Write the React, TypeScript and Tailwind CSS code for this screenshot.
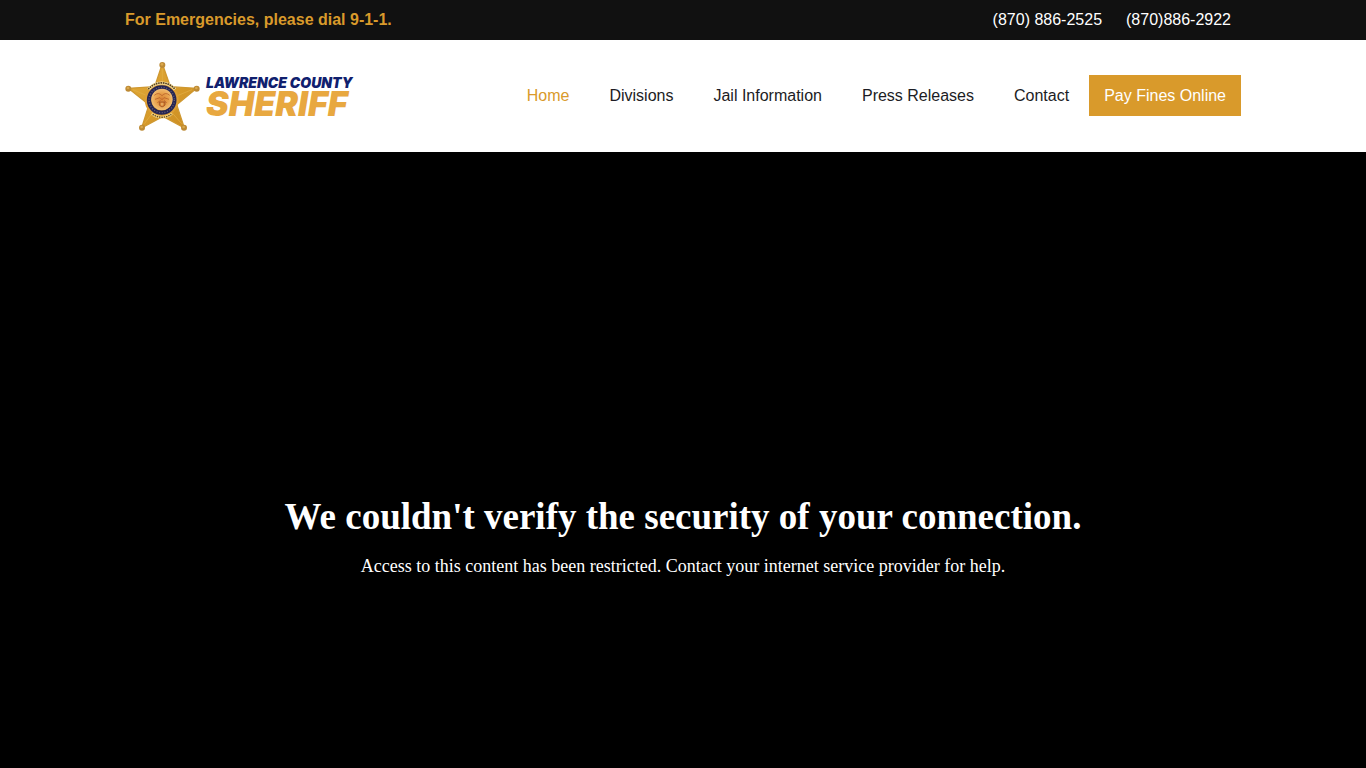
import React from 'react';

const navLinks = [
    { label: 'Home', href: '#home', active: true },
    { label: 'Divisions', href: '#divisions' },
    { label: 'Jail Information', href: '#jail' },
    { label: 'Press Releases', href: '#press' },
    { label: 'Contact', href: '#contact' },
];

const tips = [
    [143, 28],
    [246, 99],
    [208, 216],
    [82, 216],
    [41, 99],
];

const StarBadge: React.FC = () => (
    <svg viewBox="31 13 225 216" className="w-[75px] h-[72px] shrink-0" aria-hidden="true">
        <defs>
            <linearGradient id="gold" x1="0" y1="0" x2="1" y2="1">
                <stop offset="0" stopColor="#e3ac3c" />
                <stop offset="0.5" stopColor="#d99d2b" />
                <stop offset="1" stopColor="#c98a22" />
            </linearGradient>
            <radialGradient id="seal">
                <stop offset="0" stopColor="#d98234" />
                <stop offset="0.6" stopColor="#e8a14c" />
                <stop offset="1" stopColor="#f0bd73" />
            </radialGradient>
        </defs>
        <path
            d="M143 24 L167 93 L246 98 L186 147 L209 217 L145 182 L81 217 L103 147 L41 98 L120 93 Z"
            fill="url(#gold)"
            stroke="#cf9830"
            strokeWidth="4"
            strokeLinejoin="round"
        />
        <path d="M143 40 L143 80 M232 102 L188 120 M201 204 L172 171 M89 204 L114 171 M55 102 L97 120" stroke="#e2b048" strokeWidth="2" />
        {tips.map(([cx, cy]) => (
            <g key={`${cx}-${cy}`}>
                <circle cx={cx} cy={cy} r="9" fill="#bd8a35" />
                <circle cx={cx - 1} cy={cy - 2} r="4" fill="#dba94c" />
            </g>
        ))}
        <circle cx="141" cy="133" r="51" fill="#dfa036" />
        <path d="M101 101 A51 51 0 0 1 181 101" fill="none" stroke="#fbe6a8" strokeWidth="9" />
        <path d="M101 101 A51 51 0 0 1 181 101" fill="none" stroke="#5b431c" strokeWidth="5" strokeDasharray="5 2" />
        <path d="M111 174 A49 49 0 0 0 172 174" fill="none" stroke="#f2cf78" strokeWidth="8" />
        <path d="M114 176 A49 49 0 0 0 170 176" fill="none" stroke="#5b431c" strokeWidth="4" strokeDasharray="4 3" />
        <circle cx="141" cy="133" r="38" fill="none" stroke="#252553" strokeWidth="13" />
        <circle cx="141" cy="133" r="38" fill="none" stroke="#a79aa0" strokeWidth="4" strokeDasharray="3 5" opacity="0.5" />
        <circle cx="142" cy="131" r="32" fill="url(#seal)" />
        <path d="M119 119 Q131 108 142 120 Q153 108 165 119 M121 131 L136 126 L142 132 L148 126 L163 131 M128 141 L138 134 M156 141 L148 134" fill="none" stroke="#b9632a" strokeWidth="2.5" />
        <path d="M134 139 H151 V148 Q142 159 134 148 Z" fill="#d47a2a" stroke="#9c5226" strokeWidth="2.5" />
        <path d="M138 145 H147 M142 141 V151" stroke="#f5d08b" strokeWidth="2" />
    </svg>
);

const Logo: React.FC = () => (
    <a href="#home" className="flex items-center gap-1.5 font-['Inter',sans-serif] italic whitespace-nowrap">
        <StarBadge />
        <span className="flex flex-col pt-0.5">
            <span className="text-[14px] leading-[14px] font-black text-[#10206e]">LAWRENCE COUNTY</span>
            <span className="text-[34px] leading-[28px] font-black text-[#e8a840]">SHERIFF</span>
        </span>
    </a>
);

export default function App() {
    return (
        <div className="flex flex-col min-h-screen bg-black font-['Liberation_Sans',Arial,sans-serif] text-base">
            <div className="bg-[#111111]">
                <div className="flex flex-wrap justify-between max-w-[1116px] mx-auto py-2 leading-6">
                    <p className="font-bold text-[#d99a2b]">For Emergencies, please dial 9-1-1.</p>
                    <div className="flex gap-6 pr-2.5 text-white">
                        <a href="tel:8708862525">(870) 886-2525</a>
                        <a href="tel:8708862922">(870)886-2922</a>
                    </div>
                </div>
            </div>

            <header className="bg-white">
                <div className="flex flex-wrap items-center justify-between max-w-[1116px] mx-auto py-5">
                    <Logo />
                    <nav className="flex flex-wrap items-baseline pb-px leading-6">
                        {navLinks.map(link => (
                            <a
                                key={link.label}
                                href={link.href}
                                className={`px-5 ${link.active ? 'text-[#d99a2b]' : 'text-[#1c1c24] hover:text-[#d99a2b]'}`}
                            >
                                {link.label}
                            </a>
                        ))}
                        <a href="#pay" className="bg-[#d99a2b] text-white px-[15px] pt-[9px] pb-2">Pay Fines Online</a>
                    </nav>
                </div>
            </header>

            <main className="flex flex-col flex-1 items-center justify-center gap-3 pt-[154px] bg-black text-white text-center font-['Liberation_Serif',serif]">
                <h1 className="text-[37px] leading-[46px] font-bold">We couldn't verify the security of your connection.</h1>
                <p className="text-lg leading-7">Access to this content has been restricted. Contact your internet service provider for help.</p>
            </main>
        </div>
    );
}
